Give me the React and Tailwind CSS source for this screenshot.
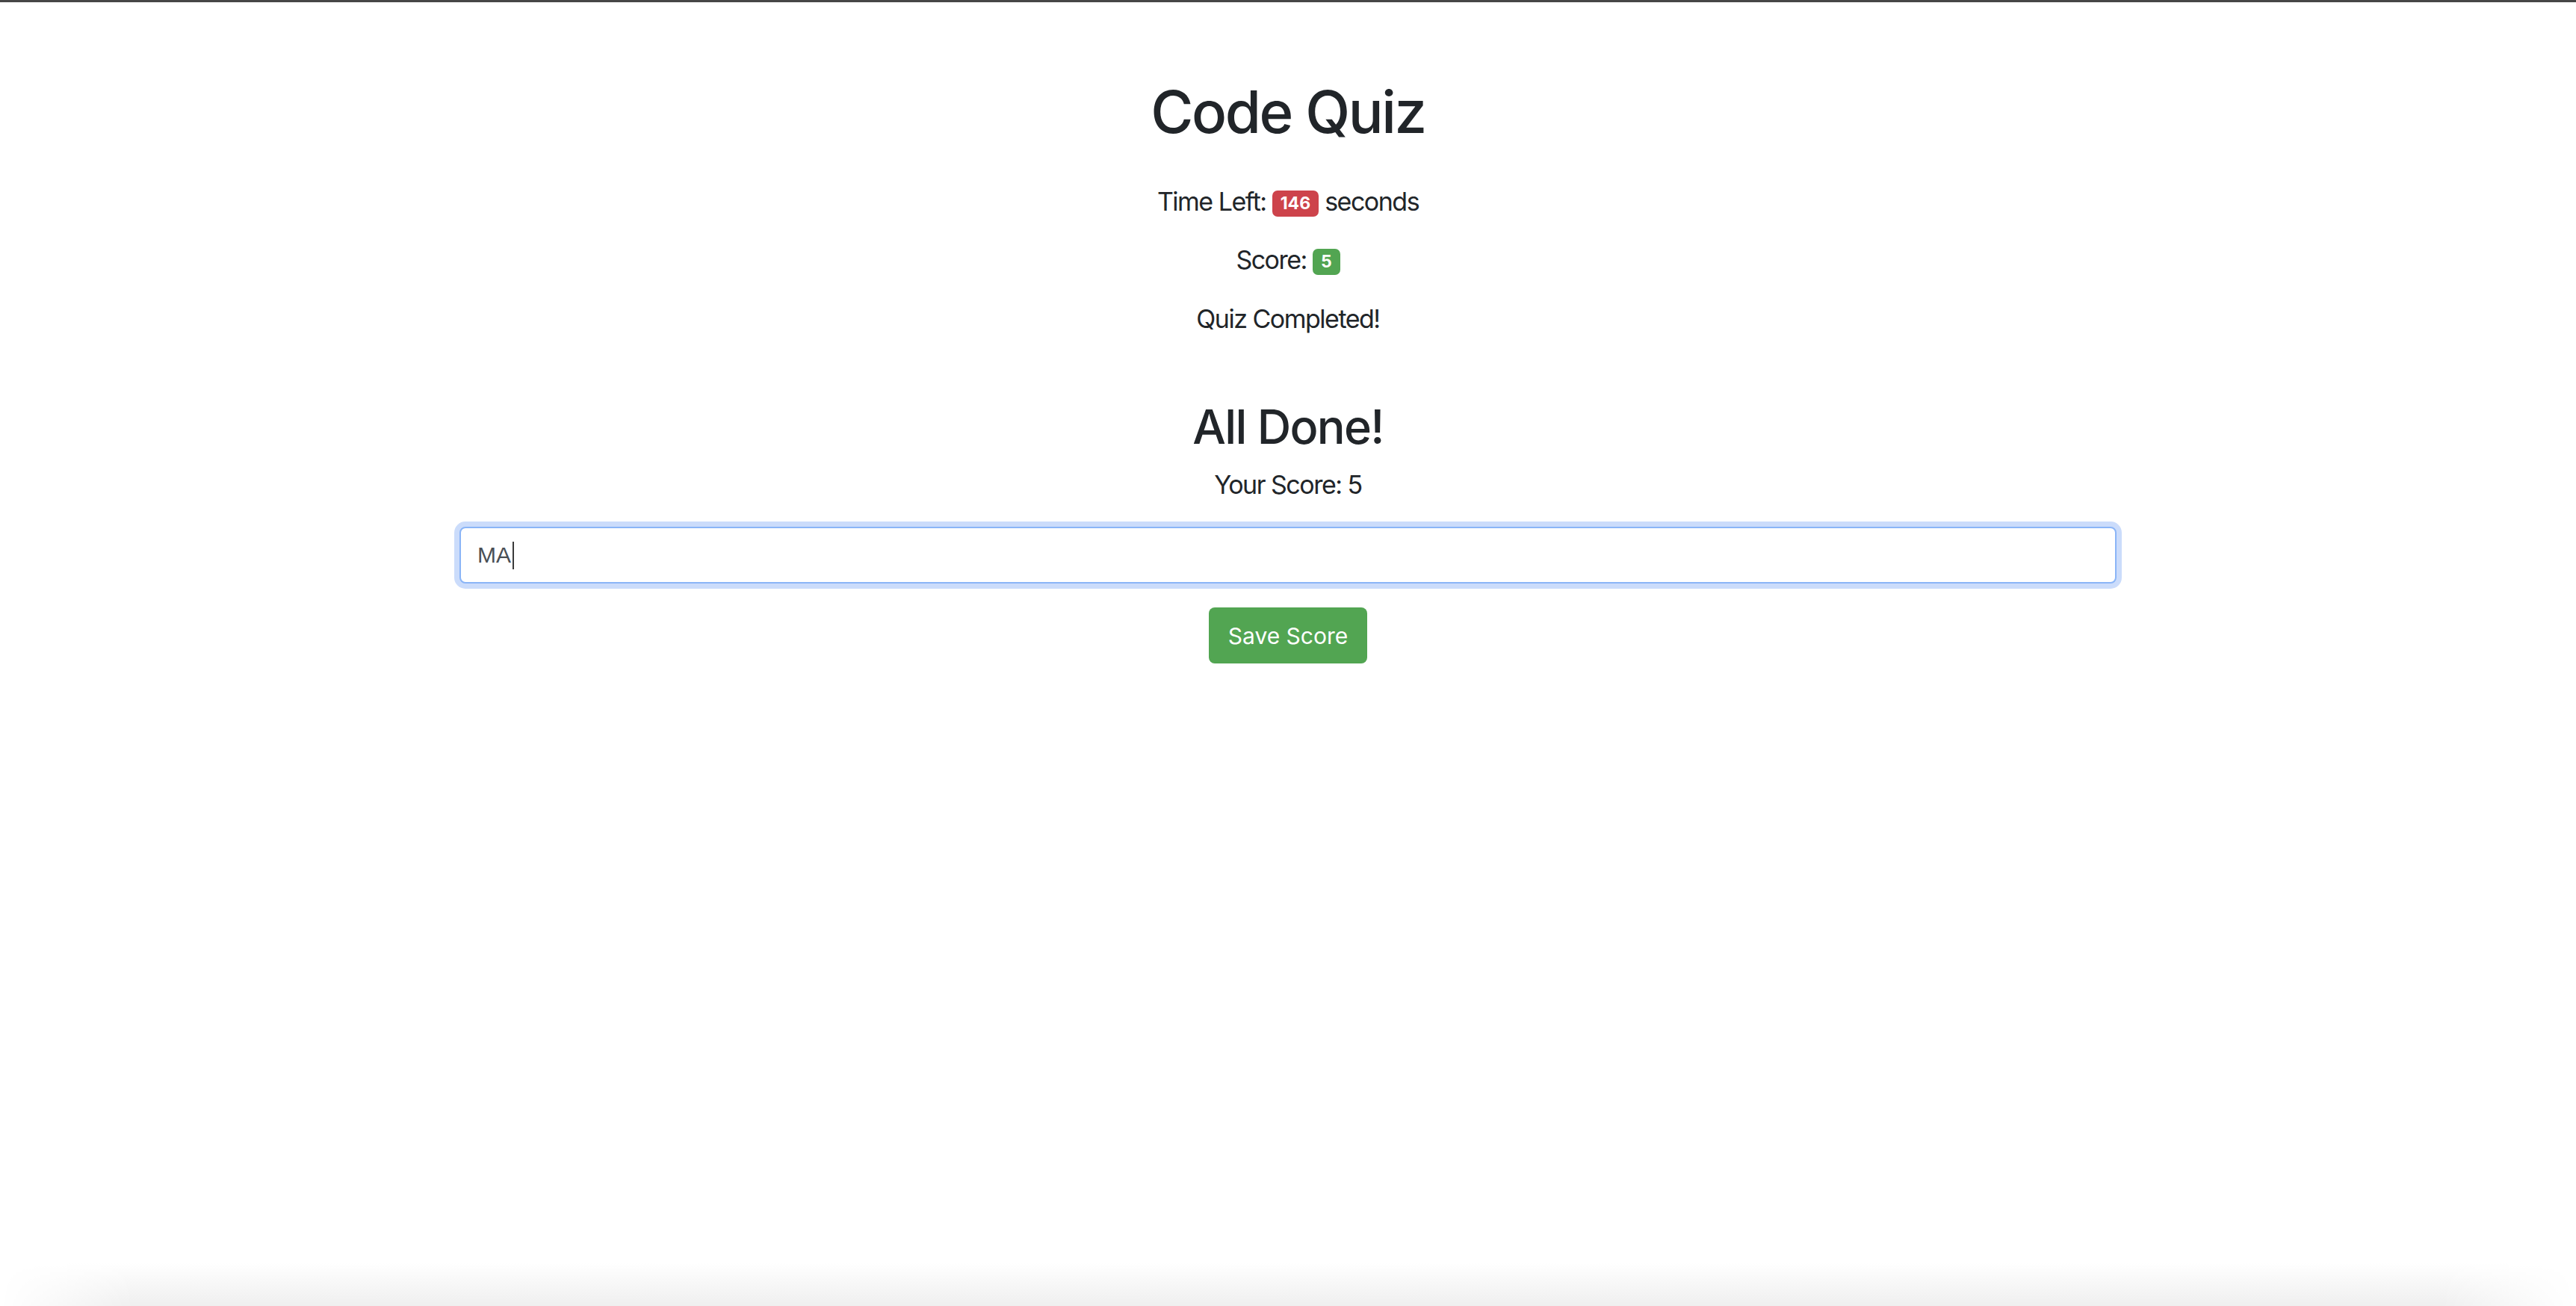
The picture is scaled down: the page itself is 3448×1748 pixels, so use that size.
import React from 'react';

const Badge = ({ tone, children }) => (
  <span
    className={`inline-block rounded-[7px] px-[11px] py-[6.5px] text-[23px] leading-[22px] font-bold tracking-normal text-white align-[2px] ${
      tone === 'danger' ? 'bg-[#cd434b]' : 'bg-[#52a552]'
    }`}
  >
    {children}
  </span>
);

const App = () => {
  const timeLeft = 146;
  const score = 5;

  return (
    <div className="min-h-screen flex flex-col bg-white text-[#212529] font-[family-name:Inter,sans-serif]">
      <div className="h-[3px] bg-[#464646]" />

      <main className="w-[2218px] mx-auto pt-[100px] text-center">
        <h1 className="text-[78px] leading-[94px] font-medium tracking-[-2.4px]">Code Quiz</h1>

        <p className="mt-[47px] text-[34px] leading-[52px] tracking-[-1.5px]">
          Time Left: <Badge tone="danger">{timeLeft}</Badge> seconds
        </p>
        <p className="mt-[26px] text-[34px] leading-[52px] tracking-[-1.5px]">
          Score: <Badge tone="success">{score}</Badge>
        </p>
        <p className="mt-[27px] text-[34px] leading-[52px] tracking-[-1.5px]">Quiz Completed!</p>

        <section>
          <h2 className="mt-[80px] text-[63px] leading-[76px] font-medium tracking-[-1.7px]">All Done!</h2>
          <p className="mt-[14px] text-[34px] leading-[52px] tracking-[-1.5px]">Your Score: {score}</p>

          {/* focused initials field */}
          <div className="mt-[30px] h-[76px] flex items-center rounded-[8px] border-2 border-[#8ab5f7] bg-white pl-[22px] shadow-[0_0_0_7px_#cbdcfb] text-left">
            <span className="text-[30px] leading-[34px] text-[#4a4f55] font-[family-name:Liberation_Sans,Arial,sans-serif]">
              MA
            </span>
            <span className="ml-[2px] w-[2px] h-[37px] bg-[#3a3a3a]" />
          </div>

          <button className="mt-[32px] h-[75px] px-[26px] rounded-[8px] bg-[#52a552] text-white text-[30px] leading-[36px]">
            Save Score
          </button>
        </section>
      </main>

      <div className="mt-auto h-[58px] bg-linear-to-b from-white to-[#efefef] [mask-image:linear-gradient(to_right,transparent,black_180px,black_calc(100%_-_180px),transparent)]" />
    </div>
  );
};

export default App;
